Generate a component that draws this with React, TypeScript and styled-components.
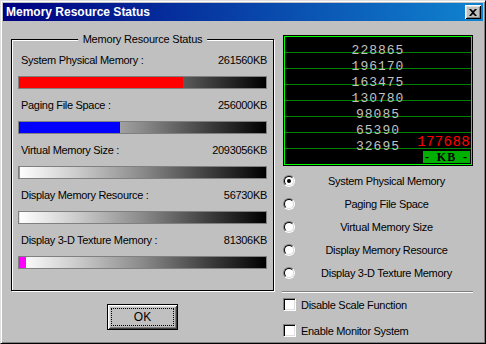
import styled, { createGlobalStyle } from "styled-components";

const GlobalStyle = createGlobalStyle`
  html, body {
    margin: 0;
    padding: 0;
    background: #c0c0c0;
  }
  body {
    font-family: "Liberation Sans", Arial, sans-serif;
  }
`;

const Window = styled.div`
  width: 486px;
  height: 344px;
  box-sizing: border-box;
  background: #c0c0c0;
  border: 1px solid;
  border-color: #dfdfdf #000 #000 #dfdfdf;
  box-shadow: inset 1px 1px #fff, inset -1px -1px #808080;
  padding: 2px;
  display: flex;
  flex-direction: column;
`;

const TitleBar = styled.div`
  height: 18px;
  flex-shrink: 0;
  display: flex;
  align-items: center;
  justify-content: space-between;
  padding: 0 2px 0 3px;
  background: linear-gradient(to right, #000080, #1084d0);
  color: #fff;
  font-weight: bold;
  font-size: 12px;
`;

const CloseButton = styled.div`
  width: 16px;
  height: 14px;
  box-sizing: border-box;
  background: #c0c0c0;
  box-shadow: inset 1px 1px #fff, inset -1px -1px #000, inset 2px 2px #dfdfdf,
    inset -2px -2px #808080;
  display: flex;
  align-items: center;
  justify-content: center;
`;

const Content = styled.div`
  display: flex;
  padding: 0 10px 0 8px;
`;

const LeftColumn = styled.div`
  width: 263px;
  display: flex;
  flex-direction: column;
  align-items: center;
  padding-top: 18px;
`;

const GroupBox = styled.div`
  position: relative;
  width: 263px;
  height: 252px;
  box-sizing: border-box;
  border: 1px solid #000;
  box-shadow: inset 1px 1px #fff, 1px 1px #fff;
  padding: 14px 6px 0 6px;
`;

const GroupLegend = styled.span`
  position: absolute;
  top: -7px;
  left: 50%;
  transform: translateX(-50%);
  background: #c0c0c0;
  padding: 0 5px;
  font-size: 11px;
  line-height: 13px;
  white-space: nowrap;
  letter-spacing: -0.2px;
`;

const MeterRow = styled.div`
  margin-bottom: 10px;
`;

const MeterLabel = styled.div`
  display: flex;
  justify-content: space-between;
  padding: 0 0 0 3px;
  font-size: 11px;
  line-height: 13px;
  letter-spacing: -0.3px;
  margin-bottom: 9px;
`;

const Bar = styled.div`
  height: 13px;
  box-sizing: border-box;
  border: 1px solid #808080;
  background: linear-gradient(
    to right,
    #ffffff,
    #c8c8c8 25%,
    #8a8a8a 50%,
    #3a3a3a 78%,
    #000000
  );
  display: flex;
`;

const BarFill = styled.div<{ $color: string }>`
  height: 100%;
  background: ${(p) => p.$color};
`;

const OkButton = styled.button`
  margin-top: 13px;
  width: 71px;
  height: 26px;
  box-sizing: border-box;
  border: 1px solid #000;
  background: #c0c0c0;
  box-shadow: inset 1px 1px #fff, inset -1px -1px #404040, inset 2px 2px #dfdfdf,
    inset -2px -2px #808080;
  padding: 3px;
  display: flex;
  font-family: "Liberation Sans", Arial, sans-serif;
  font-size: 12px;
  color: #000;
`;

const FocusRing = styled.span`
  flex: 1;
  border: 1px dotted #000;
  display: flex;
  align-items: center;
  justify-content: center;
`;

const RightColumn = styled.div`
  width: 190px;
  margin-left: 9px;
  display: flex;
  flex-direction: column;
  padding-top: 14px;
`;

const Chart = styled.div`
  height: 131px;
  box-sizing: border-box;
  background: #000;
  padding: 1px;
  display: flex;
`;

const ChartInner = styled.div`
  position: relative;
  flex: 1;
  border: 1px solid #00ff00;
  padding-top: 6px;
  background: repeating-linear-gradient(
    to bottom,
    transparent 0 15px,
    #008000 15px 16px
  );
`;

const ScaleValue = styled.div`
  text-align: center;
  font-family: "Liberation Mono", monospace;
  font-size: 13px;
  line-height: 16px;
  letter-spacing: 1px;
  color: #c0c0c0;
`;

const Corner = styled.div`
  position: absolute;
  right: 1px;
  bottom: 1px;
  display: flex;
  flex-direction: column;
  align-items: flex-end;
`;

const CurrentValue = styled.div`
  font-family: "Liberation Mono", monospace;
  font-size: 14px;
  line-height: 11px;
  letter-spacing: 0.4px;
  color: #ff0000;
  margin-bottom: 3px;
`;

const UnitBox = styled.div`
  width: 47px;
  height: 12px;
  box-sizing: border-box;
  background: #00b000;
  display: flex;
  align-items: center;
  justify-content: space-between;
  padding: 0 2px;
  font-family: "Liberation Serif", serif;
  font-weight: bold;
  font-size: 12px;
  letter-spacing: 1px;
  color: #000;
`;

const RadioList = styled.div`
  margin-top: 3px;
`;

const OptionRow = styled.div`
  height: 23px;
  display: flex;
  align-items: center;
  font-size: 11px;
  letter-spacing: -0.3px;
`;

const RadioOuter = styled.span`
  width: 12px;
  height: 12px;
  box-sizing: border-box;
  border-radius: 50%;
  border: 1px solid;
  border-color: #808080 #fff #fff #808080;
  display: flex;
  flex-shrink: 0;
`;

const RadioInner = styled.span<{ $checked: boolean }>`
  flex: 1;
  border-radius: 50%;
  border: 1px solid;
  border-color: #000 #dfdfdf #dfdfdf #000;
  background: #fff;
  display: flex;
  align-items: center;
  justify-content: center;

  &::after {
    content: "";
    width: 4px;
    height: 4px;
    border-radius: 50%;
    background: #000;
    display: ${(p) => (p.$checked ? "block" : "none")};
  }
`;

const OptionLabel = styled.span`
  flex: 1;
  text-align: center;
  padding-left: 5px;
`;

const Separator = styled.div`
  margin: 7px 0 0 -1px;
  border-top: 1px solid #808080;
  border-bottom: 1px solid #fff;
`;

const CheckList = styled.div`
  margin-top: 5px;
  display: flex;
  flex-direction: column;
  gap: 13px;
`;

const CheckRow = styled.div`
  height: 13px;
  display: flex;
  align-items: center;
  gap: 5px;
  font-size: 11px;
  letter-spacing: -0.3px;
`;

const CheckBox = styled.span`
  width: 13px;
  height: 13px;
  box-sizing: border-box;
  border: 1px solid;
  border-color: #808080 #fff #fff #808080;
  box-shadow: inset 1px 1px #000, inset -1px -1px #dfdfdf;
  background: #fff;
  flex-shrink: 0;
`;

const meters = [
  { label: "System Physical Memory :", value: "261560KB", color: "#ff0000", pct: 66.4 },
  { label: "Paging File Space :", value: "256000KB", color: "#0000ff", pct: 40.9 },
  { label: "Virtual Memory Size :", value: "2093056KB", color: "#00ff00", pct: 0.5 },
  { label: "Display Memory Resource :", value: "56730KB", color: "#ffff00", pct: 0.5 },
  { label: "Display 3-D Texture Memory :", value: "81306KB", color: "#ff00ff", pct: 3 },
];

const scale = ["228865", "196170", "163475", "130780", "98085", "65390", "32695"];

const options = [
  "System Physical Memory",
  "Paging File Space",
  "Virtual Memory Size",
  "Display Memory Resource",
  "Display 3-D Texture Memory",
];

const App = () => {
  return (
    <>
      <GlobalStyle />
      <Window>
        <TitleBar>
          <span>Memory Resource Status</span>
          <CloseButton>
            <svg width="8" height="7" viewBox="0 0 8 7">
              <path d="M0 0h2l2 2 2-2h2L5 3.5 8 7H6L4 5 2 7H0l3-3.5z" fill="#000" />
            </svg>
          </CloseButton>
        </TitleBar>
        <Content>
          <LeftColumn>
            <GroupBox>
              <GroupLegend>Memory Resource Status</GroupLegend>
              {meters.map((m) => (
                <MeterRow key={m.label}>
                  <MeterLabel>
                    <span>{m.label}</span>
                    <span>{m.value}</span>
                  </MeterLabel>
                  <Bar>
                    <BarFill $color={m.color} style={{ width: `${m.pct}%` }} />
                  </Bar>
                </MeterRow>
              ))}
            </GroupBox>
            <OkButton>
              <FocusRing>OK</FocusRing>
            </OkButton>
          </LeftColumn>
          <RightColumn>
            <Chart>
              <ChartInner>
                {scale.map((s) => (
                  <ScaleValue key={s}>{s}</ScaleValue>
                ))}
                <Corner>
                  <CurrentValue>177688</CurrentValue>
                  <UnitBox>
                    <span>-</span>
                    <span>KB</span>
                    <span>-</span>
                  </UnitBox>
                </Corner>
              </ChartInner>
            </Chart>
            <RadioList>
              {options.map((o, i) => (
                <OptionRow key={o}>
                  <RadioOuter>
                    <RadioInner $checked={i === 0} />
                  </RadioOuter>
                  <OptionLabel>{o}</OptionLabel>
                </OptionRow>
              ))}
            </RadioList>
            <Separator />
            <CheckList>
              <CheckRow>
                <CheckBox />
                <span>Disable Scale Function</span>
              </CheckRow>
              <CheckRow>
                <CheckBox />
                <span>Enable Monitor System</span>
              </CheckRow>
            </CheckList>
          </RightColumn>
        </Content>
      </Window>
    </>
  );
};

export default App;
